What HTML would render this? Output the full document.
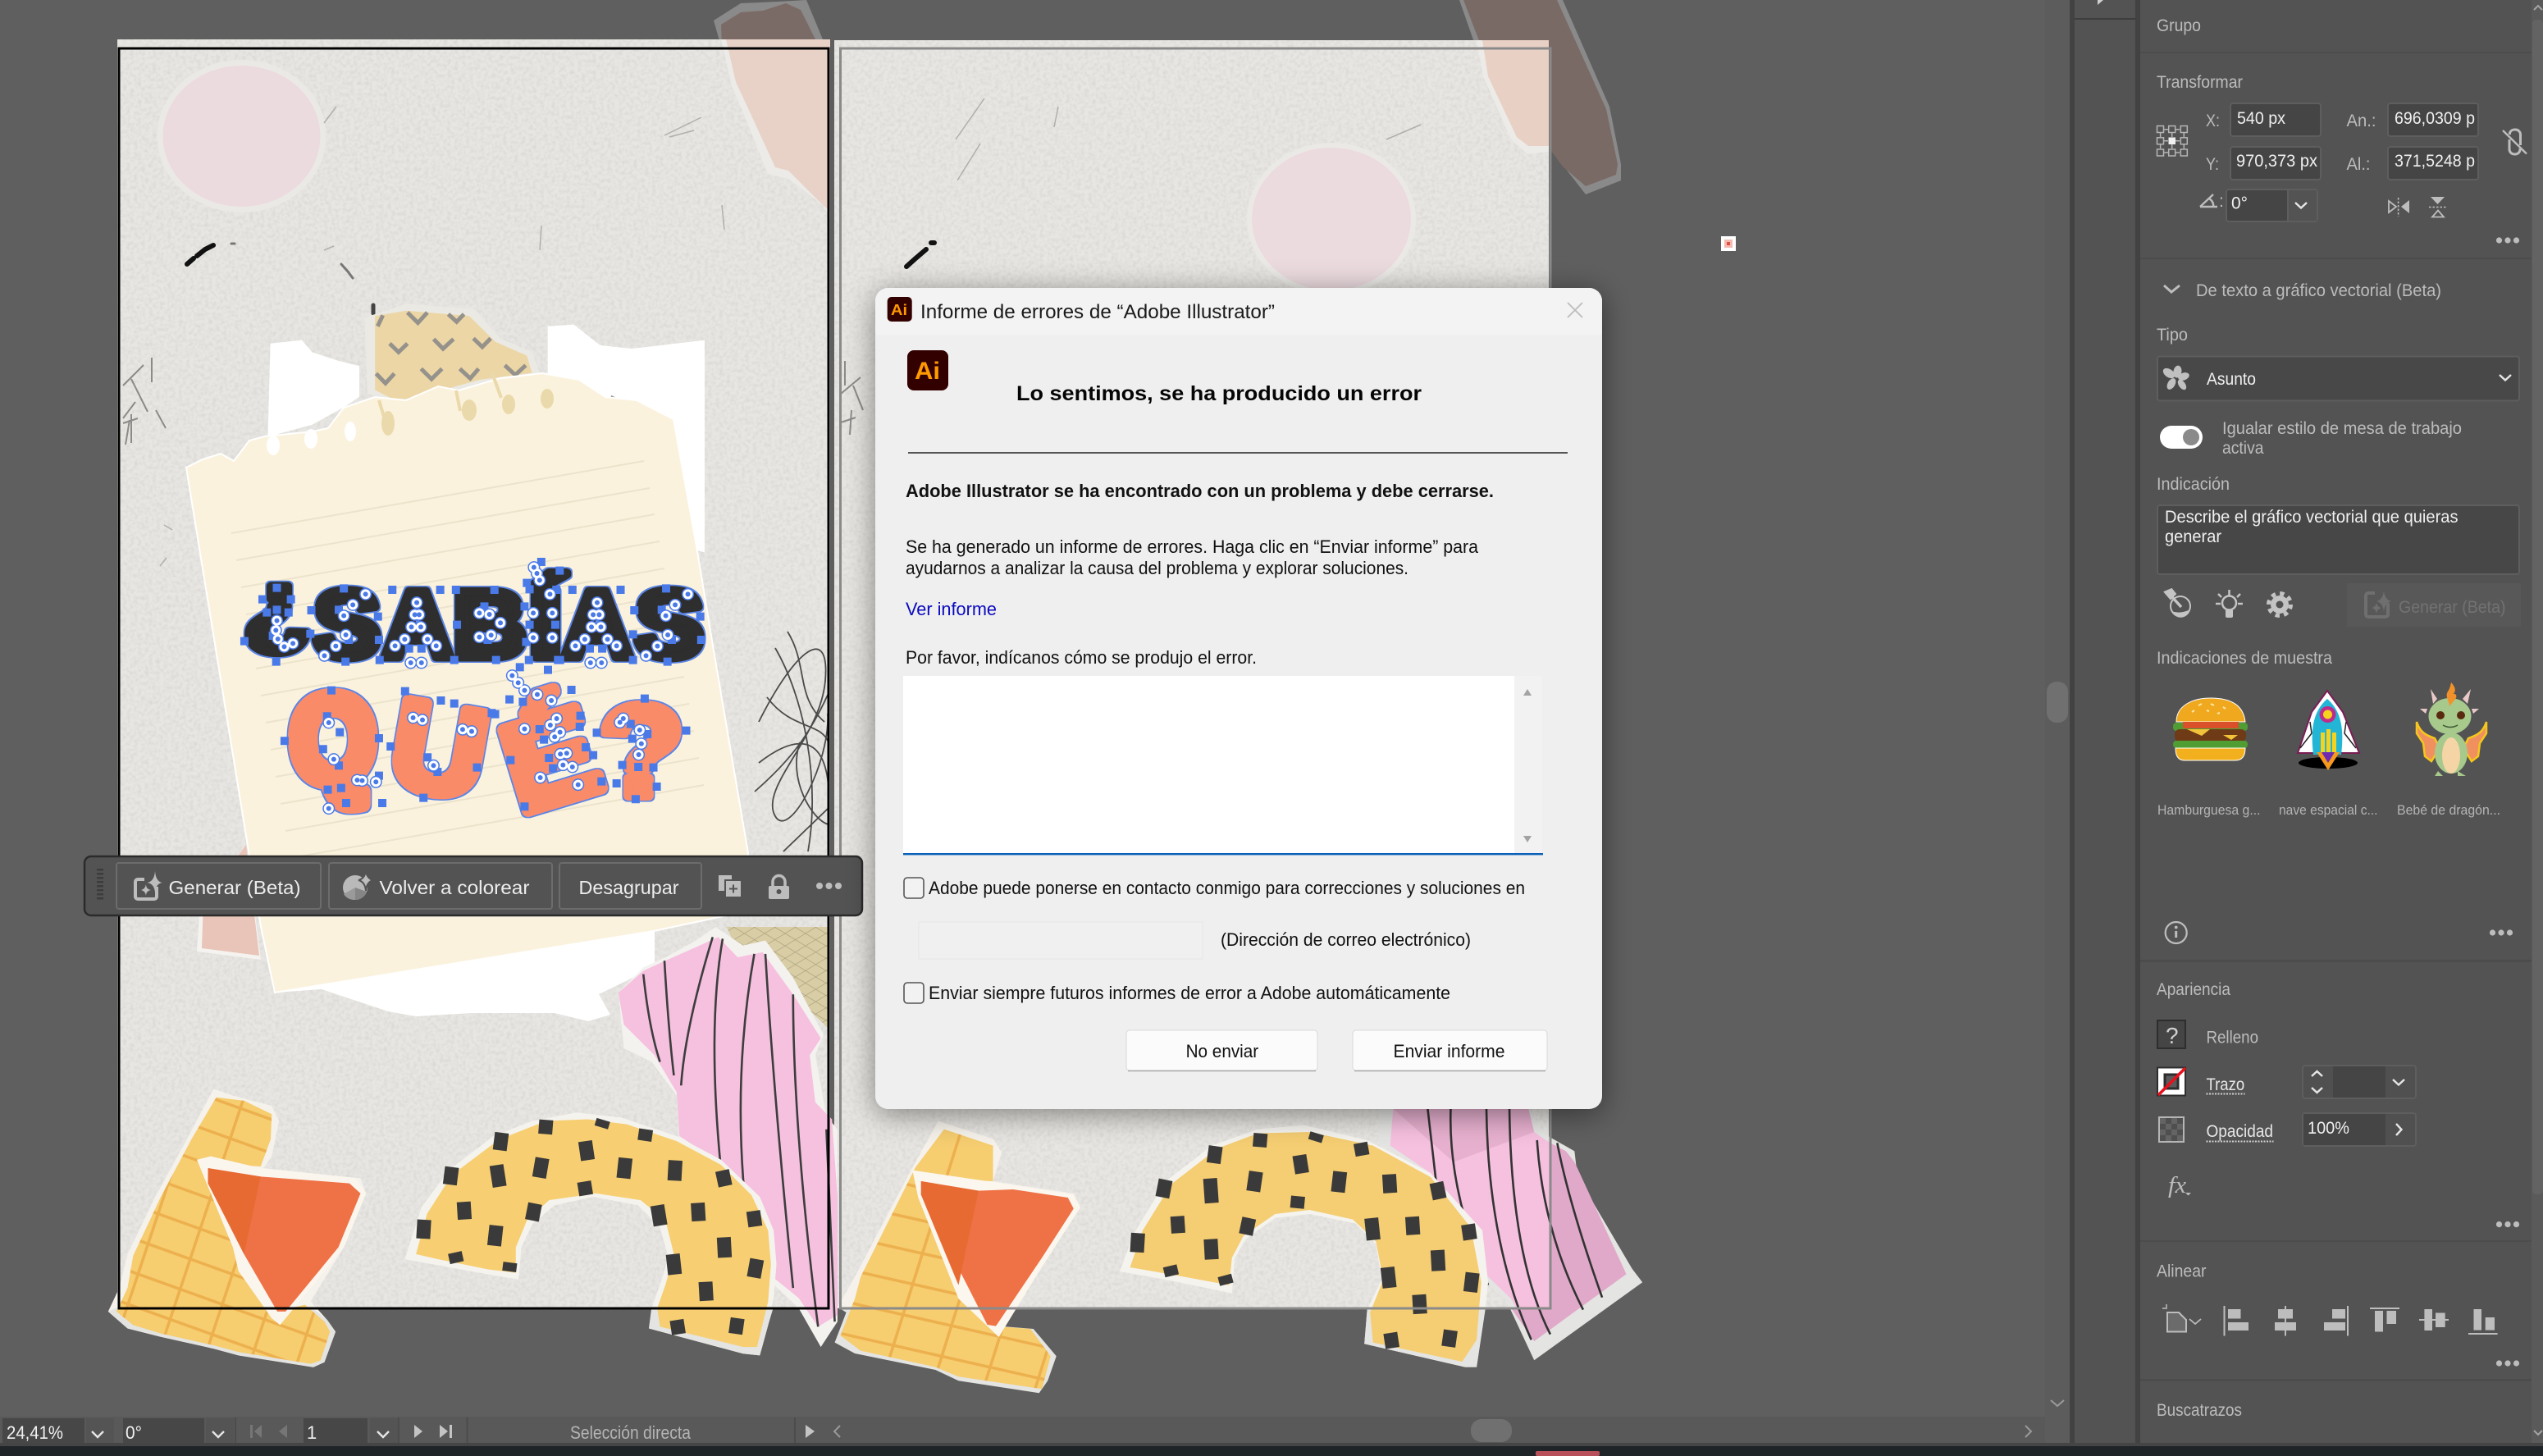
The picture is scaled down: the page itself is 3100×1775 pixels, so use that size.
<!DOCTYPE html>
<html lang="es"><head><meta charset="utf-8"><title>Adobe Illustrator</title>
<style>
html,body{margin:0;padding:0;background:#5f5f5f;width:3100px;height:1775px;overflow:hidden}
svg{display:block}
text{font-family:"Liberation Sans",sans-serif;white-space:pre}
.z *{vector-effect:non-scaling-stroke}
.l{fill:#bcbcbc;font-size:21px}
.v{fill:#f0f0f0;font-size:21px}
.d{fill:#111;font-size:22px}
.t{fill:#ededed;font-size:23px}
.s{fill:#f0f0f0;font-size:22px}
.ch{fill:none;stroke:#e6e6e6;stroke-width:2.4}
.ic{fill:#bdbdbd}
.o{fill:none;stroke:#bdbdbd;stroke-width:2}
.let1{font-weight:700;font-size:116px;fill:#2d2d2d;stroke:#2d2d2d;stroke-width:11;stroke-linejoin:round}
.let2{font-weight:700;fill:#f98b68;stroke:#f98b68;stroke-width:14;stroke-linejoin:round}
</style></head><body>
<svg xmlns="http://www.w3.org/2000/svg" width="3100" height="1775" viewBox="0 0 3100 1775">
<defs>
<filter id="noise" x="0" y="0" width="100%" height="100%"><feTurbulence type="fractalNoise" baseFrequency=".22" numOctaves="3" seed="4"/><feColorMatrix values="0 0 0 0 .45 0 0 0 0 .44 0 0 0 0 .42 .5 0 0 0 -.19"/></filter>
<filter id="ol" x="-5%" y="-20%" width="110%" height="140%"><feMorphology in="SourceAlpha" operator="dilate" radius="1.6" result="m"/><feFlood flood-color="#5a85e4"/><feComposite in2="m" operator="in" result="b"/><feMerge><feMergeNode in="b"/><feMergeNode in="SourceGraphic"/></feMerge></filter>
<filter id="sh" x="-10%" y="-10%" width="120%" height="120%"><feDropShadow dx="0" dy="6" stdDeviation="18" flood-color="#000" flood-opacity=".45"/></filter>
<clipPath id="cl1"><polygon points="390,505 440,515 490,555 488,630 470,710 360,700 500,1140 550,1120 585,1170 595,1200 578,1285 560,1295 430,1260 385,1240 290,1205 240,1180 210,1140 230,1070 240,975 290,800 345,630"/></clipPath>
<clipPath id="cl2"><polygon points="215,230 300,290 300,420 175,410 300,950 365,960 400,1060 385,1180 240,1135 200,1100 70,1040 35,985 60,850 70,770 165,370"/></clipPath>
<pattern id="plaid" width="26" height="26" patternUnits="userSpaceOnUse" patternTransform="rotate(45)"><rect width="26" height="26" fill="#d8cda4"/><path d="M0 0H26M0 0V26" stroke="#a79d7c" stroke-width="2.5"/></pattern>
</defs>

<!-- canvas -->
<rect width="3100" height="1775" fill="#5f5f5f"/>

<!-- brown pieces outside artboards -->
<polygon points="870,25 903,4 948,2 983,0 1008,60 1012,120 1012,60 880,60" fill="#8a8a8a"/>
<polygon points="879,30 903,15 930,13 958,4 976,12 1000,60 880,60" fill="#7b6b66"/>
<polygon points="1779,0 1905,0 1962,130 1976,200 1976,220 1933,237 1912,210 1888,180 1800,60" fill="#8a8a8a"/>
<polygon points="1784,0 1898,0 1958,133 1972,200 1970,213 1933,227 1905,203 1888,180 1807,60" fill="#7a6a65"/>

<!-- papers -->
<rect x="143" y="48" width="869" height="1547" fill="#e8e6e2"/>
<rect x="1017" y="49" width="871" height="1546" fill="#e8e6e2"/>
<rect x="143" y="48" width="869" height="1547" filter="url(#noise)"/>
<rect x="1017" y="49" width="871" height="1546" filter="url(#noise)"/>

<!-- left top art -->
<polygon points="879,48 1012,48 1012,265 1003,250 961,218 936,212 905,135 892,105" fill="#ecebe7"/>
<polygon points="885,48 1012,48 1012,257 1005,252 961,208 945,204 911,130 897,100" fill="#e8d2c8"/>
<ellipse cx="294.5" cy="166" rx="103" ry="93" fill="#ebe9e6"/>
<ellipse cx="294.5" cy="166" rx="96" ry="86" fill="#ebdbdf"/>
<g fill="none" stroke="#111" stroke-width="5" stroke-linecap="round">
<path d="M228 322l8-7M240 312l10-8 10-5" stroke-width="6"/><path d="M416 322l8 9 6 8M282 297h4" stroke-width="3" stroke="#777"/><path d="M455 372v10" stroke="#444" stroke-width="5"/>
</g>
<g fill="none" stroke="#6e6e6e" stroke-width="2" opacity=".75">
<path d="M185 436v30M150 470l25-25M160 462l20 40M165 490l-15 20M190 500l12 22M158 512l-5 30M160 540V505M150 516l18-6"/>
</g>
<g fill="none" stroke="#9a9894" stroke-width="1.5" opacity=".7">
<path d="M810 165l45-22M816 167l30-8M410 130l-15 20M395 305l12-5M660 275l-2 30M880 250l3 30"/>
<path d="M252 615l6 4M195 690l8-10M200 640l10 6"/>
</g>

<!-- white strips / tan piece -->
<g class="z" transform="matrix(.6378 0 0 .4209 100 0)">
<polygon fill="#fff" points="360,995 420,985 440,1020 490,1045 530,1060 530,1150 500,1180 440,1230 355,1265"/>
<polygon fill="#fff" points="890,945 940,940 990,1000 1050,1010 1190,985 1190,1600 1100,1560 890,1100"/>
<polygon fill="#ebe9e3" points="540,920 620,880 750,895 800,980 860,1020 880,1100 640,1180 545,1140"/>
<polygon fill="#ecd6a6" points="560,915 620,900 740,915 790,990 850,1030 860,1080 760,1100 640,1150 600,1160 560,1130"/>
<path fill="none" stroke="#95928c" stroke-width="5" d="M622 905l20 30 18-30M700 910l16 22 14-22M588 995l17 25 17-25M672 982l18 28 20-28M748 980l17 25 16-25M562 1082l18 28 17-28M648 1068l20 30 20-30M722 1068l20 28 16-28M808 1058l20 28 20-28"/>
<path fill="none" stroke="#95928c" stroke-width="5" d="M565 945l10-32M720 1175l8-25M880 1170l12-28M960 1155l8-18M1010 1150l25 20"/>
</g>

<!-- left note -->
<polygon fill="#fff" points="335,1210 392,1206 473,1233 507,1239 575,1235 676,1235 717,1245 744,1237 730,1212 798,1179 798,1132 500,1150"/>
<polygon fill="#fbf2dd" stroke="#fff" stroke-width="2" points="227,570 247,560 269,553 285,562 304,537 323,532 381,526 400,522 419,497 457,484 495,488 534,471 559,476 610,461 661,455 706,463 738,484 776,488 821,511 848,660 870,793 912,1040 905,1112 797,1135 335,1210 318,1130"/>
<g fill="#ead9ab"><ellipse cx="473" cy="516" rx="8" ry="15"/><ellipse cx="572" cy="500" rx="9" ry="13"/><ellipse cx="620" cy="493" rx="8" ry="12"/><ellipse cx="667" cy="486" rx="8" ry="12"/></g>
<path d="M462 488l9 30M556 476l5 25M600 455l11 30" stroke="#ead9ab" stroke-width="4" fill="none"/>
<g fill="#fff"><ellipse cx="427" cy="526" rx="7" ry="12"/><ellipse cx="379" cy="535" rx="8" ry="12"/><ellipse cx="333" cy="543" rx="8" ry="12"/></g>
<path fill="none" stroke="#ece3cd" stroke-width="2" d="M282 650L785 562M288 683L792 595M294 716L798 627M300 749L804 660M306 782L810 693M312 815L816 726M318 848L822 759M324 881L828 792M330 914L834 825M336 947L840 858M342 980L846 891M348 1013L852 924M354 1046L858 957"/>

<!-- scribble -->
<path fill="none" stroke="#4b4b4b" stroke-width="1.8" d="M925 880C970 790 1012 760 1006 830C1000 900 925 960 945 995C962 1025 1012 930 1009 870M925 930C970 895 1005 895 1010 960M955 1038L1010 985M945 790C980 850 1000 950 985 1038M920 965C960 930 985 900 1010 845M975 905C960 950 990 1000 1010 1005M935 850C965 890 1000 880 1010 905M960 770C985 810 970 850 1005 880"/>

<!-- Sabias -->
<g filter="url(#ol)">
<text class="let1" x="297" y="776" textLength="82" lengthAdjust="spacingAndGlyphs">¿</text>
<text class="let1" x="382" y="801" textLength="82" lengthAdjust="spacingAndGlyphs">S</text>
<text class="let1" x="466" y="801" textLength="86" lengthAdjust="spacingAndGlyphs">A</text>
<text class="let1" x="552" y="801" textLength="90" lengthAdjust="spacingAndGlyphs">B</text>
<text class="let1" x="644" y="801" textLength="42" lengthAdjust="spacingAndGlyphs">Í</text>
<text class="let1" x="685" y="801" textLength="86" lengthAdjust="spacingAndGlyphs">A</text>
<text class="let1" x="774" y="801" textLength="84" lengthAdjust="spacingAndGlyphs">S</text>
</g>
<g filter="url(#ol)">
<text class="let2" style="stroke-width:19" x="354" y="953" font-size="150" textLength="104" lengthAdjust="spacingAndGlyphs">Q</text>
<text class="let2" transform="rotate(10 537 910)" x="479" y="966" font-size="152" textLength="114" lengthAdjust="spacingAndGlyphs">U</text>
<text class="let2" style="stroke-width:15" transform="rotate(-17 670 925)" x="616" y="978" font-size="150" textLength="110" lengthAdjust="spacingAndGlyphs">É</text>
<text class="let2" style="stroke-width:12" x="730" y="970" font-size="158" textLength="104" lengthAdjust="spacingAndGlyphs">?</text>
</g>
<g class="z" transform="matrix(.408 0 0 .3333 260 660)" fill="none">
<path stroke="#4a7ae8" stroke-width="10" stroke-linecap="square" d="M190 170h0M147 212h0M232 212h0M160 260h0M225 260h0M190 250h0M93 365h0M188 440h0M178 345h0M290 338h0M390 172h0M293 252h0M375 250h0M492 275h0M495 360h0M395 440h0M405 360h0M535 177h0M678 177h0M497 434h0M585 392h0M622 392h0M720 434h0M725 177h0M840 177h0M728 305h0M845 434h0M810 238h0M820 360h0M930 238h0M935 368h0M980 75h0M1035 107h0M937 152h0M945 175h0M1025 177h0M945 305h0M1022 305h0M943 434h0M1030 434h0M1073 177h0M1217 177h0M1036 434h0M1125 392h0M1162 392h0M1254 434h0M1353 172h0M1258 252h0M1340 250h0M1455 275h0M1458 360h0M1357 440h0M1370 360h0M1254 340h0M353 545h0M213 730h0M495 720h0M342 908h0M382 902h0M397 957h0M505 957h0M495 857h0M340 640h0M378 698h0M328 760h0M375 820h0M573 548h0M680 582h0M720 593h0M832 628h0M530 750h0M788 827h0M628 938h0M640 790h0M670 843h0M916 460h0M1000 470h0M885 578h0M925 587h0M1070 543h0M1097 638h0M1095 678h0M1113 753h0M1135 782h0M1160 878h0M930 970h0M888 800h0M975 687h0M988 725h0M1003 792h0M1015 830h0M842 632h0M1289 575h0M1413 692h0M1146 700h0M1247 668h0M1297 705h0M1252 722h0M1222 818h0M1315 827h0M1270 825h0M1205 885h0M1325 897h0M1262 943h0"/>
<g id="hds" stroke-linecap="round">
<path stroke="#4a7ae8" stroke-width="15" d="M455 193h0M417 232h0M390 272h0M396 342h0M366 383h0M332 418h0M190 290h0M187 325h0M193 357h0M212 385h0M238 373h0M608 224h0M602 268h0M615 268h0M592 313h0M620 313h0M572 358h0M640 358h0M543 382h0M666 382h0M590 444h0M622 444h0M795 262h0M825 267h0M858 298h0M795 350h0M830 343h0M958 95h0M967 117h0M975 142h0M1006 193h0M956 262h0M1013 262h0M956 352h0M1013 352h0M1147 224h0M1135 268h0M1153 268h0M1130 313h0M1158 313h0M1110 358h0M1178 358h0M1082 382h0M1205 382h0M1127 444h0M1160 444h0M1418 193h0M1380 232h0M1352 272h0M1358 342h0M1327 383h0M1293 418h0M345 663h0M360 797h0M345 977h0M445 875h0M430 873h0M486 880h0M597 645h0M625 653h0M745 688h0M772 695h0M658 820h0M893 491h0M911 517h0M930 545h0M968 560h0M1010 582h0M930 686h0M1026 648h0M1007 672h0M1036 698h0M1020 715h0M1037 778h0M1056 775h0M1045 818h0M1073 825h0M977 864h0M1090 890h0M1225 648h0M1215 662h0M1274 690h0M1279 740h0M1271 780h0"/>
<path stroke="#fff" stroke-width="12" d="M455 193h0M417 232h0M390 272h0M396 342h0M366 383h0M332 418h0M190 290h0M187 325h0M193 357h0M212 385h0M238 373h0M608 224h0M602 268h0M615 268h0M592 313h0M620 313h0M572 358h0M640 358h0M543 382h0M666 382h0M590 444h0M622 444h0M795 262h0M825 267h0M858 298h0M795 350h0M830 343h0M958 95h0M967 117h0M975 142h0M1006 193h0M956 262h0M1013 262h0M956 352h0M1013 352h0M1147 224h0M1135 268h0M1153 268h0M1130 313h0M1158 313h0M1110 358h0M1178 358h0M1082 382h0M1205 382h0M1127 444h0M1160 444h0M1418 193h0M1380 232h0M1352 272h0M1358 342h0M1327 383h0M1293 418h0M345 663h0M360 797h0M345 977h0M445 875h0M430 873h0M486 880h0M597 645h0M625 653h0M745 688h0M772 695h0M658 820h0M893 491h0M911 517h0M930 545h0M968 560h0M1010 582h0M930 686h0M1026 648h0M1007 672h0M1036 698h0M1020 715h0M1037 778h0M1056 775h0M1045 818h0M1073 825h0M977 864h0M1090 890h0M1225 648h0M1215 662h0M1274 690h0M1279 740h0M1271 780h0"/>
<path stroke="#4a7ae8" stroke-width="6" d="M455 193h0M417 232h0M390 272h0M396 342h0M366 383h0M332 418h0M190 290h0M187 325h0M193 357h0M212 385h0M238 373h0M608 224h0M602 268h0M615 268h0M592 313h0M620 313h0M572 358h0M640 358h0M543 382h0M666 382h0M590 444h0M622 444h0M795 262h0M825 267h0M858 298h0M795 350h0M830 343h0M958 95h0M967 117h0M975 142h0M1006 193h0M956 262h0M1013 262h0M956 352h0M1013 352h0M1147 224h0M1135 268h0M1153 268h0M1130 313h0M1158 313h0M1110 358h0M1178 358h0M1082 382h0M1205 382h0M1127 444h0M1160 444h0M1418 193h0M1380 232h0M1352 272h0M1358 342h0M1327 383h0M1293 418h0M345 663h0M360 797h0M345 977h0M445 875h0M430 873h0M486 880h0M597 645h0M625 653h0M745 688h0M772 695h0M658 820h0M893 491h0M911 517h0M930 545h0M968 560h0M1010 582h0M930 686h0M1026 648h0M1007 672h0M1036 698h0M1020 715h0M1037 778h0M1056 775h0M1045 818h0M1073 825h0M977 864h0M1090 890h0M1225 648h0M1215 662h0M1274 690h0M1279 740h0M1271 780h0"/>
</g>
</g>

<!-- left bottom art -->
<g><polygon points="300,1030 318,1170 240,1160 244,1100" fill="#f5f3ef"/><polygon points="300,1030 316,1165 246,1156 248,1100" fill="#e9c4b8"/></g>
<g class="z" transform="matrix(.6761 0 0 .4113 0 1130)">
<polygon fill="#d9cda2" points="1310,0 1493,0 1493,300 1430,200 1380,40 1330,70"/>
<polygon fill="url(#plaid)" points="1310,0 1493,0 1493,300 1430,200 1380,40 1330,70"/>
<polygon fill="#f3f2ee" points="1290,0 1340,55 1380,40 1430,150 1485,320 1470,380 1490,560 1510,600 1510,1170 1480,1245 1440,1130 1395,1060 1225,640 1220,500 1175,400 1125,360 1115,195 1160,120 1200,90 1255,40"/>
<polygon fill="#f6c0df" points="1295,30 1330,90 1375,75 1430,200 1480,330 1460,380 1470,520 1500,570 1510,800 1510,1150 1475,1185 1440,1100 1395,1040 1380,850 1300,700 1225,620 1220,490 1180,380 1125,290 1115,195 1160,130 1200,100 1255,60"/>
<path fill="none" stroke="#3d3d3d" stroke-width="2.600" d="M1160 140Q1170 300 1190 400M1198 100Q1205 300 1215 440M1285 30Q1235 300 1228 470M1303 35Q1275 300 1300 720M1360 80Q1320 450 1345 840M1380 80Q1395 500 1430 1070M1430 200Q1430 600 1475 1185M1490 600L1505 1170"/>
<polygon fill="#f5f2ec" points="385,480 420,500 490,530 503,575 490,680 475,715 650,745 660,790 620,950 560,1110 590,1165 605,1200 585,1290 565,1305 430,1270 385,1250 290,1215 230,1190 195,1140 215,1070 230,970 280,800 340,620"/>
<polygon fill="#e3e3e1" points="215,1125 560,1125 590,1165 605,1200 585,1290 565,1305 430,1270 385,1250 290,1215 230,1190 195,1140"/>
<polygon fill="#f6cd6f" points="390,505 440,515 490,555 488,630 470,710 360,700 500,1140 550,1120 585,1170 595,1200 578,1285 560,1295 430,1260 385,1240 290,1205 240,1180 210,1140 230,1070 240,975 290,800 345,630"/>
<g clip-path="url(#cl1)"><path fill="none" stroke="#edb04e" stroke-width="3.500" d="M360 480L190 1320M445 480L275 1320M530 480L360 1320M615 480L445 1320M700 480L530 1320M785 480L615 1320M200 400L620 648M200 500L620 748M200 600L620 848M200 700L620 948M200 800L620 1048M200 900L620 1148M200 1000L620 1248M200 1100L620 1348"/></g>
<polygon fill="#faf6ee" points="355,690 380,680 470,715 640,745 660,790 620,950 530,1130 505,1180 490,1160 430,1020 420,950"/>
<polygon fill="#ef7246" points="375,715 470,740 630,760 650,790 610,950 515,1140 500,1140 440,970 375,760"/>
<polygon fill="#e86a33" points="375,715 470,740 440,970 375,760"/>
<polygon fill="#f5f3ee" points="730,985 760,830 810,720 890,620 960,575 1040,550 1120,565 1220,620 1300,690 1370,800 1395,900 1400,1000 1395,1100 1385,1180 1370,1270 1340,1265 1170,1190 1175,1130 1190,1060 1205,980 1190,890 1150,825 1070,800 1000,825 960,880 940,950 935,1045 880,1030 780,1000"/>
<polygon fill="#e4e4e2" points="1175,1125 1395,1125 1385,1180 1370,1270 1340,1265 1170,1190"/>
<polygon fill="#f7cf72" points="750,970 770,850 815,735 900,630 985,575 1060,570 1130,585 1220,635 1300,705 1355,795 1385,900 1390,1000 1385,1110 1365,1245 1340,1245 1190,1185 1185,1130 1200,1060 1215,970 1200,870 1155,810 1075,790 990,810 950,870 930,950 930,1025 880,1015 790,985"/>
<path fill="none" stroke="#3a3a3a" stroke-width="17" d="M985 572l-2 42M1088 572l-4 22M905 610l-4 52M1165 600l-3 34M1055 635l5 56M815 712l-4 52M895 706l6 64M978 685l-6 58M1128 685l-4 60M1218 692l-2 60M1302 722l6 46M1053 755l4 40M836 815l2 52M965 820l-6 50M1185 825l6 60M1258 818l2 54M1358 842l4 46M765 868l-2 56M895 885l-4 60M1305 920l2 60M1213 970l4 60M1365 985l-6 54M820 965l4 30M920 995l-2 26M1272 1052l2 56M1220 1165l4 42M1330 1160l-4 46"/>
</g>

<!-- right art -->
<ellipse cx="1623" cy="267" rx="103" ry="93" fill="#ebe9e6"/>
<ellipse cx="1623" cy="267" rx="97" ry="87" fill="#ebdbdf"/>
<polygon points="1800,49 1888,49 1888,185 1862,188 1842,170 1808,93" fill="#ecebe7"/>
<polygon points="1807,49 1888,49 1888,178 1863,178 1849,167 1814,93" fill="#e8d0c4"/>
<g fill="none" stroke="#6e6e6e" stroke-width="2" opacity=".75">
<path d="M1030 440v30M1025 480l24-20M1040 470l12 30M1038 500l-2 30M1025 515l18-6"/>
</g>
<g fill="none" stroke="#9a9894" stroke-width="1.500" opacity=".7">
<path d="M1200 120l-35 50M1195 175l-28 45M1290 130l-5 25M1690 170l42-18"/>
</g>
<path d="M1105 325l10-9 14-12M1135 296h4" stroke="#111" stroke-width="6" fill="none" stroke-linecap="round"/>
<g class="z" transform="matrix(.7018 0 0 .3333 1000 1300)">
<polygon fill="#e4e4e2" points="970,155 1230,155 1260,250 1310,310 1315,400 1410,740 1428,790 1240,1075 1190,850 1160,800 1120,600 1050,380 970,280"/>
<polygon fill="#f6c0df" points="995,155 1230,155 1240,240 1260,270 1295,310 1310,350 1400,760 1240,1005 1200,850 1155,760 1130,590 1060,390 990,290"/>
<polygon fill="#e1a9c9" points="1267,280 1295,310 1310,350 1400,760 1240,1005 1200,885 1267,885"/>
<polygon fill="#d49dbd" opacity=".45" points="995,155 1230,155 1240,240 1100,350"/>
<path fill="none" stroke="#333" stroke-width="2.600" d="M1055 155L1070 430M1095 155Q1090 450 1160 800M1157 155Q1160 650 1235 1000M1197 155Q1200 700 1268 980M1245 270Q1255 600 1325 890M1280 280Q1300 500 1358 845"/>
<polygon fill="#f6f2eb" points="205,200 300,265 315,315 300,420 440,465 450,515 380,750 335,880 30,880 60,770 160,370"/>
<polygon fill="#e4e4e2" points="30,880 335,880 310,950 370,960 410,1060 395,1150 380,1195 240,1150 200,1110 60,1050 25,1010 45,900"/>
<polygon fill="#f6cd6f" points="215,230 300,290 300,420 175,410 300,950 365,960 400,1060 385,1180 240,1135 200,1100 70,1040 35,985 60,850 70,770 165,370"/>
<g clip-path="url(#cl2)"><path fill="none" stroke="#edb04e" stroke-width="3.500" d="M250 200L100 1200M340 200L190 1200M430 200L280 1200M520 200L370 1200M0 360L420 560M0 480L420 680M0 600L420 800M0 720L420 920M0 840L420 1040M0 960L420 1160M0 1080L420 1280"/></g>
<polygon fill="#fbf7ee" points="160,380 290,420 440,470 452,515 380,750 310,990 290,950 240,850 170,480"/>
<polygon fill="#ef7246" points="175,420 275,455 335,450 430,480 440,520 385,700 305,950 290,945 175,470"/>
<polygon fill="#e86a33" points="175,420 275,455 240,800 175,470"/>
<polygon fill="#f5f3ee" points="520,750 545,610 600,420 680,290 760,230 840,215 950,270 1060,390 1150,600 1160,790 1155,890 1140,1100 1120,1100 945,1015 950,890 975,780 965,650 930,575 850,540 790,555 740,630 720,700 715,830 600,780"/>
<polygon fill="#e4e4e2" points="950,885 1155,885 1140,1100 1120,1100 945,1015"/>
<polygon fill="#f5cd72" points="538,735 560,600 610,430 690,300 760,245 850,240 960,290 1060,405 1130,590 1148,790 1140,1000 1115,1080 960,1010 955,900 978,780 965,640 925,560 850,525 790,540 735,620 715,700 710,800 620,765"/>
<path fill="none" stroke="#3a3a3a" stroke-width="17" d="M765 245l-2 50M863 245l-4 28M687 292l-4 62M938 280l4 46M832 325l5 66M600 415l-6 64M677 410l3 90M757 385l-5 72M903 385l-4 75M988 395l2 68M1070 425l6 60M830 475l-2 44M620 548l2 62M745 555l-6 60M957 555l4 80M1028 550l2 66M1125 578l4 56M552 610l-2 70M678 632l2 74M1072 672l2 76M985 735l4 75M1133 755l-4 70M607 730l4 36M702 765l4 32M1040 835l2 70M990 975l4 55M1095 965l-4 60"/>
</g>

<!-- artboards -->
<rect x="145" y="59" width="865" height="1536" fill="none" stroke="#000" stroke-width="3"/>
<rect x="1024.5" y="59" width="865.5" height="1536" fill="none" stroke="#8a8a8a" stroke-width="3"/>

<!-- stray square -->
<rect x="2098" y="288" width="18" height="18" fill="#fff"/><rect x="2102" y="292" width="10" height="10" fill="#f4b9b0"/><rect x="2105" y="295" width="4" height="4" fill="#e0503f"/>

<!-- floating toolbar -->
<rect x="103" y="1044" width="948" height="72" rx="8" fill="#535353" stroke="#2b2b2b" stroke-width="2.500"/>
<path d="M122 1059v39" stroke="#3c3c3c" stroke-width="8" stroke-dasharray="2.500 2.500" fill="none"/>
<g fill="none" stroke="#6c6c6c" stroke-width="2"><rect x="142" y="1052" width="249" height="56" rx="3"/><rect x="401" y="1052" width="272" height="56" rx="3"/><rect x="682" y="1052" width="173" height="56" rx="3"/></g>
<path class="o" style="stroke-width:4" d="M176 1072h-8a3 3 0 0 0-3 3v18a3 3 0 0 0 3 3h20a3 3 0 0 0 3-3v-12"/>
<path class="ic" d="M189 1062Q190 1075 198 1076Q190 1077 189 1088Q188 1077 179 1076Q188 1075 189 1062ZM178 1078Q178 1084 184 1085Q178 1086 178 1092Q177 1086 172 1085Q177 1084 178 1078Z"/>
<text class="t" x="205.5" y="1090" textLength="161" lengthAdjust="spacingAndGlyphs">Generar (Beta)</text>
<circle cx="433" cy="1082" r="15" fill="#b9b9b9"/><path d="M433 1082L433 1097A15 15 0 0 0 447 1087Z" fill="#858585"/><path d="M433 1082L419 1090A15 15 0 0 0 433 1097Z" fill="#9a9a9a"/>
<path class="ic" stroke="#535353" stroke-width="2" d="M446 1061Q447 1071 455 1073Q447 1075 446 1086Q445 1075 437 1073Q445 1071 446 1061Z"/>
<text class="t" x="462.5" y="1090" textLength="183" lengthAdjust="spacingAndGlyphs">Volver a colorear</text>
<text class="t" x="705.5" y="1090" textLength="122" lengthAdjust="spacingAndGlyphs">Desagrupar</text>
<rect x="876" y="1067" width="16" height="19" class="ic"/><rect x="884" y="1073" width="20" height="21" class="ic" stroke="#535353" stroke-width="2"/><path d="M889 1083.500h10M894 1078.500v10" stroke="#535353" stroke-width="2"/>
<rect x="937" y="1080" width="25" height="16" rx="2" class="ic"/><path d="M942 1081v-6a7.500 7.500 0 0 1 15 0v6" fill="none" stroke="#bdbdbd" stroke-width="3.500"/><circle cx="949.500" cy="1087" r="3" fill="#535353"/>
<g class="ic"><circle cx="999" cy="1080" r="4"/><circle cx="1010.500" cy="1080" r="4"/><circle cx="1022" cy="1080" r="4"/></g>

<!-- dialog -->
<rect x="1067" y="351" width="886" height="1001" rx="16" fill="#efefef" filter="url(#sh)"/>
<path d="M1083 351h854a16 16 0 0 1 16 16v41h-886v-41a16 16 0 0 1 16-16z" fill="#f3f3f3"/>
<rect x="1081.700" y="362" width="30" height="30" rx="5" fill="#330000"/>
<text x="1086" y="384" font-size="18" font-weight="700" fill="#ff9a00" textLength="20" lengthAdjust="spacingAndGlyphs">Ai</text>
<text x="1122" y="388" fill="#1a1a1a" font-size="24" textLength="432" lengthAdjust="spacingAndGlyphs">Informe de errores de “Adobe Illustrator”</text>
<path d="M1911 369l18 18M1929 369l-18 18" stroke="#bdbdbd" stroke-width="1.800" fill="none"/>
<rect x="1106" y="427" width="50" height="49" rx="8" fill="#330000"/>
<text x="1115" y="462" font-size="30" font-weight="700" fill="#ff9a00" textLength="31" lengthAdjust="spacingAndGlyphs">Ai</text>
<text x="1239" y="488" fill="#050505" font-size="25" font-weight="700" textLength="494" lengthAdjust="spacingAndGlyphs">Lo sentimos, se ha producido un error</text>
<path d="M1107 552h804" stroke="#222" stroke-width="1.600"/>
<text class="d" x="1104" y="606" font-weight="700" textLength="717" lengthAdjust="spacingAndGlyphs">Adobe Illustrator se ha encontrado con un problema y debe cerrarse.</text>
<text class="d" x="1104" y="674" textLength="698" lengthAdjust="spacingAndGlyphs">Se ha generado un informe de errores. Haga clic en “Enviar informe” para</text>
<text class="d" x="1104" y="700" textLength="613" lengthAdjust="spacingAndGlyphs">ayudarnos a analizar la causa del problema y explorar soluciones.</text>
<text x="1104" y="750" font-size="22" fill="#0a0ac0" textLength="111" lengthAdjust="spacingAndGlyphs">Ver informe</text>
<text class="d" x="1104" y="809" textLength="428" lengthAdjust="spacingAndGlyphs">Por favor, indícanos cómo se produjo el error.</text>
<rect x="1101" y="824" width="745" height="216" fill="#fff"/><rect x="1846" y="824" width="34" height="216" fill="#f2f2f2"/>
<rect x="1101" y="1040" width="780" height="2.400" fill="#0a60b8"/>
<path d="M1862 840l5 8h-10zM1862 1027l5-8h-10z" fill="#a3a3a3"/>
<rect x="1102" y="1070" width="24" height="25" rx="4" fill="#f2f2f2" stroke="#555" stroke-width="1.600"/>
<text class="d" x="1132" y="1090" textLength="727" lengthAdjust="spacingAndGlyphs">Adobe puede ponerse en contacto conmigo para correcciones y soluciones en</text>
<rect x="1120" y="1124" width="346" height="45" fill="#f0f0f0" stroke="#e6e6e6"/>
<text class="d" x="1488" y="1153" textLength="305" lengthAdjust="spacingAndGlyphs">(Dirección de correo electrónico)</text>
<rect x="1102" y="1198" width="24" height="25" rx="4" fill="#f2f2f2" stroke="#555" stroke-width="1.600"/>
<text class="d" x="1132" y="1218" textLength="636" lengthAdjust="spacingAndGlyphs">Enviar siempre futuros informes de error a Adobe automáticamente</text>
<g fill="#fbfbfb" stroke="#d8d8d8"><rect x="1373" y="1256" width="233" height="49" rx="4"/><rect x="1649" y="1256" width="237" height="49" rx="4"/></g>
<path d="M1375 1305.500h229M1651 1305.500h233" stroke="#aaa" stroke-width="1.400"/>
<text class="d" x="1445.600" y="1289" textLength="88.600" lengthAdjust="spacingAndGlyphs">No enviar</text>
<text class="d" x="1698.500" y="1289" textLength="136" lengthAdjust="spacingAndGlyphs">Enviar informe</text>

<!-- status bar & scrollers -->
<rect x="0" y="1727" width="2493" height="32" fill="#595959"/>
<rect x="3" y="1729" width="100" height="30" fill="#474747"/><rect x="105" y="1729" width="34" height="30" fill="#545454"/>
<rect x="150" y="1729" width="99" height="30" fill="#474747"/><rect x="251" y="1729" width="34" height="30" fill="#545454"/>
<rect x="370" y="1729" width="78" height="30" fill="#474747"/><rect x="451" y="1729" width="34" height="30" fill="#545454"/>
<path d="M569.500 1728v31M969 1728v31M287 1728v31M486 1728v31" stroke="#4c4c4c" stroke-width="2"/>
<text class="s" x="8" y="1754" textLength="69" lengthAdjust="spacingAndGlyphs">24,41%</text>
<text class="s" x="153" y="1754" textLength="20" lengthAdjust="spacingAndGlyphs">0°</text>
<text class="s" x="374" y="1754">1</text>
<text x="695" y="1754" font-size="22" fill="#b4b4b4" textLength="147" lengthAdjust="spacingAndGlyphs">Selección directa</text>
<path class="ch" d="M112 1745l7 7 7-7M259 1745l7 7 7-7M460 1745l7 7 7-7"/>
<path d="M305 1737h3v16h-3zM319 1737v16l-9-8zM350 1737v16l-10-8z" fill="#767676"/>
<path d="M505 1737v16l10-8zM536 1737v16l10-8zM548 1737h3v16h-3zM982 1737v16l11-8z" fill="#c4c4c4"/>
<rect x="1793" y="1730" width="50" height="28" rx="13" fill="#707070"/>
<path d="M1024 1738l-7 7 7 7M2469 1738l7 7-7 7" fill="none" stroke="#9a9a9a" stroke-width="2"/>
<rect x="2493" y="0" width="30" height="1759" fill="#5c5c5c"/>
<rect x="2495" y="831" width="26" height="50" rx="12" fill="#707070"/>
<path d="M2500 1707l8 7 8-7" fill="none" stroke="#9a9a9a" stroke-width="2"/>

<!-- right docks -->
<rect x="2523" y="0" width="6" height="1759" fill="#424242"/>
<rect x="2529" y="0" width="74" height="1759" fill="#535353"/>
<rect x="2529" y="22" width="74" height="2" fill="#3d3d3d"/>
<path d="M2557 0v6l7-6z" fill="#d0d0d0"/>
<rect x="2603" y="0" width="6" height="1759" fill="#424242"/>
<rect x="2609" y="0" width="477" height="1759" fill="#535353"/>
<rect x="3086" y="0" width="14" height="1759" fill="#5a5a5a"/>
<rect x="3087" y="24" width="13" height="1432" rx="5" fill="#636363"/>
<path d="M3089 12l5-5 5 5M3089 1744l5 5 5-5" fill="none" stroke="#a5a5a5" stroke-width="2"/>
<g fill="#4c4c4c"><rect x="2609" y="63" width="477" height="2"/><rect x="2609" y="314" width="477" height="2"/><rect x="2609" y="1170" width="477" height="3"/><rect x="2609" y="1512" width="477" height="2"/><rect x="2609" y="1681" width="477" height="3"/></g>

<!-- panel: transform -->
<text class="l" x="2629" y="38" textLength="54" lengthAdjust="spacingAndGlyphs">Grupo</text>
<text class="l" x="2629" y="107" textLength="105" lengthAdjust="spacingAndGlyphs">Transformar</text>
<g fill="none" stroke="#b5b5b5" stroke-width="1.500">
<path d="M2638 157.700h5M2652 157.700h5M2638 171.800h5M2652 171.800h5M2638 186h5M2652 186h5M2633.600 162v5M2633.600 176v5M2647.700 162v5M2647.700 176v5M2662.300 162v5M2662.300 176v5"/>
<rect x="2629.500" y="153.500" width="8" height="8"/><rect x="2643.700" y="153.500" width="8" height="8"/><rect x="2658.300" y="153.500" width="8" height="8"/>
<rect x="2629.500" y="167.800" width="8" height="8"/><rect x="2658.300" y="167.800" width="8" height="8"/>
<rect x="2629.500" y="182" width="8" height="8"/><rect x="2643.700" y="182" width="8" height="8"/><rect x="2658.300" y="182" width="8" height="8"/>
</g><rect x="2643.500" y="167.500" width="8.500" height="8.500" fill="#f0f0f0"/>
<text class="l" x="2689" y="154" textLength="17" lengthAdjust="spacingAndGlyphs">X:</text>
<text class="l" x="2689" y="207" textLength="16" lengthAdjust="spacingAndGlyphs">Y:</text>
<text class="l" x="2860.500" y="154" textLength="36" lengthAdjust="spacingAndGlyphs">An.:</text>
<text class="l" x="2860.500" y="207" textLength="29" lengthAdjust="spacingAndGlyphs">Al.:</text>
<g fill="#454545" stroke="#5e5e5e" stroke-width="2">
<rect x="2719" y="126" width="110" height="40" rx="3"/><rect x="2719" y="179" width="110" height="40" rx="3"/>
<rect x="2911" y="126" width="110" height="40" rx="3"/><rect x="2911" y="179" width="110" height="40" rx="3"/>
<rect x="2714" y="231" width="111" height="39" rx="3"/>
</g>
<rect x="2790" y="232" width="34" height="37" fill="#535353"/>
<path d="M2789 231v39" stroke="#5e5e5e" stroke-width="2"/>
<text class="v" x="2727" y="151" textLength="59" lengthAdjust="spacingAndGlyphs">540 px</text>
<text class="v" x="2726" y="203" textLength="99" lengthAdjust="spacingAndGlyphs">970,373 px</text>
<text class="v" x="2919" y="151" textLength="98" lengthAdjust="spacingAndGlyphs">696,0309 p</text>
<text class="v" x="2919" y="203" textLength="98" lengthAdjust="spacingAndGlyphs">371,5248 p</text>
<text class="v" x="2720" y="254.500" textLength="20" lengthAdjust="spacingAndGlyphs">0°</text>
<path class="ch" d="M2798 247l7 6.500 7-6.500"/>
<path d="M2682 252h21M2682 252l16-15M2693 242q6 4 5 10" fill="none" stroke="#bdbdbd" stroke-width="2.400"/>
<text class="l" x="2705" y="252">:</text>
<path d="M3059.500 164v-2a6 6 0 0 1 6-4h1a6 6 0 0 1 6 6v13M3072 181v2a6 6 0 0 1-6 5h-1a6 6 0 0 1-6-6v-12" fill="none" stroke="#bdbdbd" stroke-width="3"/>
<path d="M3051 159l29 28.500" stroke="#bdbdbd" stroke-width="2.400"/>
<path d="M2912 245l9 7-9 7z" fill="none" stroke="#bdbdbd" stroke-width="1.800"/><path d="M2937 244l-10 8 10 8z" fill="#bdbdbd"/><path d="M2923.600 241v23" stroke="#bdbdbd" stroke-width="1.600" stroke-dasharray="2.500 2"/>
<path d="M2963 240h17l-8.500 9z" fill="#bdbdbd"/><path d="M2965 264.500h14l-7-8z" fill="none" stroke="#bdbdbd" stroke-width="1.800"/><path d="M2961 252.500h22" stroke="#bdbdbd" stroke-width="1.600" stroke-dasharray="2.500 2"/>
<g class="ic"><circle cx="3046.500" cy="293" r="3.600"/><circle cx="3057" cy="293" r="3.600"/><circle cx="3067.500" cy="293" r="3.600"/></g>

<!-- text to vector -->
<path d="M2638 348l9 8 10-8" fill="none" stroke="#bdbdbd" stroke-width="3"/>
<text class="l" x="2677" y="361" textLength="299" lengthAdjust="spacingAndGlyphs">De texto a gráfico vectorial (Beta)</text>
<text class="l" x="2629" y="415" textLength="38" lengthAdjust="spacingAndGlyphs">Tipo</text>
<rect x="2630" y="434.500" width="441" height="54" rx="3" fill="#484848" stroke="#5e5e5e" stroke-width="2"/>
<g fill="#c0c0c0" transform="translate(2653 461)"><ellipse cx="0" cy="-8" rx="5" ry="7.500" transform="rotate(10)"/><ellipse cx="-9" cy="-6" rx="5" ry="8" transform="rotate(-55 -9 -6)"/><ellipse cx="9" cy="-2" rx="4.500" ry="7" transform="rotate(70 9 -2)"/><ellipse cx="-6" cy="7" rx="4.500" ry="7.500" transform="rotate(30 -6 7)"/><ellipse cx="7" cy="8" rx="4" ry="7" transform="rotate(-35 7 8)"/></g>
<text class="v" x="2690" y="469" fill="#fff" textLength="60" lengthAdjust="spacingAndGlyphs">Asunto</text>
<path class="ch" d="M3047 457l7 6.500 7-6.500"/>
<rect x="2633" y="519" width="52" height="28" rx="14" fill="#fff"/><circle cx="2671" cy="533" r="10" fill="#8a8a8a"/>
<text class="l" x="2709" y="529" textLength="292" lengthAdjust="spacingAndGlyphs">Igualar estilo de mesa de trabajo</text>
<text class="l" x="2709" y="553" textLength="50.500" lengthAdjust="spacingAndGlyphs">activa</text>
<text class="l" x="2629" y="597" textLength="89" lengthAdjust="spacingAndGlyphs">Indicación</text>
<rect x="2630" y="616" width="441" height="84" rx="3" fill="#474747" stroke="#5e5e5e" stroke-width="2"/>
<text class="v" x="2639" y="637" textLength="357.500" lengthAdjust="spacingAndGlyphs">Describe el gráfico vectorial que quieras</text>
<text class="v" x="2639" y="661" textLength="69" lengthAdjust="spacingAndGlyphs">generar</text>
<!-- tools -->
<circle cx="2658" cy="739" r="12" fill="none" stroke="#c4c4c4" stroke-width="2"/><path d="M2647 745a12 12 0 0 0 23-2q-12 6-23 2z" fill="#c4c4c4"/><path d="M2640 722l7-3 4 5-5 5zM2648 728l11 12" fill="#c4c4c4" stroke="#c4c4c4" stroke-width="3.500"/>
<circle cx="2717.500" cy="735" r="8.500" fill="none" stroke="#c4c4c4" stroke-width="2.500"/><path d="M2713 744h9v7a2 2 0 0 1-2 2h-5a2 2 0 0 1-2-2z" fill="#c4c4c4"/><path d="M2717.500 719v7M2704 724l4 4M2731 724l-4 4M2701 736h6M2728 736h6" stroke="#c4c4c4" stroke-width="2.500"/>
<circle cx="2779" cy="737" r="11" fill="#c4c4c4"/><circle cx="2779" cy="737" r="13.500" fill="none" stroke="#c4c4c4" stroke-width="5" stroke-dasharray="5.300 5.300"/><circle cx="2779" cy="737" r="4.500" fill="#535353"/>
<rect x="2861" y="711" width="212" height="53" fill="#585858"/>
<path d="M2895 723h-8a3 3 0 0 0-3 3v23a3 3 0 0 0 3 3h21a3 3 0 0 0 3-3v-14" fill="none" stroke="#6f6f6f" stroke-width="4"/>
<path d="M2906 720Q2907 731 2915 733Q2907 735 2906 746Q2905 735 2897 733Q2905 731 2906 720ZM2897 735Q2898 740 2903 741Q2898 742 2897 748Q2896 742 2891 741Q2896 740 2897 735Z" fill="#6f6f6f"/>
<text x="2924" y="747" font-size="21" fill="#727272" textLength="130.500" lengthAdjust="spacingAndGlyphs">Generar (Beta)</text>
<text class="l" x="2629" y="809" textLength="214" lengthAdjust="spacingAndGlyphs">Indicaciones de muestra</text>
<!-- burger -->
<path d="M2653 880c0-20 20-29 42-29 26 0 40 10 42 29z" fill="#f0a81e" stroke="#fff" stroke-width="1"/>
<rect x="2649" y="881" width="91" height="10" rx="4" fill="#4f9d33"/>
<rect x="2661" y="880" width="68" height="8" fill="#d9502b"/>
<rect x="2651" y="889" width="87" height="15" rx="6" fill="#6e3b16"/>
<path d="M2666 889h28l-10 8zM2710 896h18l-8 6z" fill="#f3c33a"/>
<rect x="2649" y="903" width="91" height="9" rx="4" fill="#4f9d33"/>
<path d="M2652 912h85q0 15-12 15h-62q-11 0-11-15z" fill="#f2b01e" stroke="#fff" stroke-width="1"/>
<path d="M2680 860l4-2M2695 858l4 2M2710 862l3 2M2672 868l3-2M2703 870l3-1M2690 866l3 1" stroke="#fbe6a6" stroke-width="2"/>
<!-- rocket -->
<ellipse cx="2838" cy="930" rx="36" ry="7" fill="#000"/>
<polygon points="2837,842 2856,868 2876,918 2801,918 2818,868" fill="#fff" stroke="#7a1d55" stroke-width="2"/>
<path d="M2804 912l14-18-2-14M2872 912l-14-18 2-14" fill="none" stroke="#222" stroke-width="1.500"/>
<path d="M2837 852c16 14 21 34 17 68h-34c-4-34 1-54 17-68z" fill="#22b5d5"/>
<circle cx="2837.500" cy="871" r="10" fill="#bd2c8a"/><circle cx="2837.500" cy="871" r="5.500" fill="#f7d21c"/>
<path d="M2829 893h5v24h-5zM2836 889h5v28h-5zM2843 893h5v24h-5z" fill="#f7d21c"/>
<polygon points="2824,917 2852,917 2838,939" fill="#f59a1a"/>
<polygon points="2830,917 2846,917 2838,930" fill="#6c2bb0"/>
<!-- dragon -->
<path d="M2946 880c4 12 10 16 22 20l6 12-10 16-8-6-2-16-8-12zM3031 880c-4 12-10 16-22 20l-6 12 10 16 8-6 2-16 8-12z" fill="#f1905f" stroke="#f5c71c" stroke-width="2.500"/>
<ellipse cx="2988" cy="918" rx="20" ry="25" fill="#a7c98c"/>
<ellipse cx="2988" cy="921" rx="11" ry="22" fill="#f5d5a5"/>
<path d="M2972 940l-4 6h10zM2996 940l10 6h-10z" fill="#a7c98c"/>
<ellipse cx="2986.500" cy="873" rx="26" ry="22" fill="#a7c98c"/>
<path d="M2966 858l-3-18 8 12zM3008 858l4-18-10 12zM2957 870l-7-6 9 0zM3015 870l7-6-9 0z" fill="#e8c9c7"/>
<path d="M2988 832c6 6 6 12 2 14 4-1 5 2 4 5l-8 10c0-6-6-12-2-18 2-3 3-6 4-11z" fill="#f3922a"/>
<circle cx="2975" cy="872" r="5" fill="#5a2a10"/><circle cx="3000" cy="872" r="5" fill="#5a2a10"/>
<path d="M2978 884q9 5 18 0" fill="none" stroke="#3d5a33" stroke-width="1.500"/>
<text x="2630" y="993" font-size="16.500" fill="#b4b4b4" textLength="125.500" lengthAdjust="spacingAndGlyphs">Hamburguesa g...</text>
<text x="2778" y="993" font-size="16.500" fill="#b4b4b4" textLength="120.500" lengthAdjust="spacingAndGlyphs">nave espacial c...</text>
<text x="2922" y="993" font-size="16.500" fill="#b4b4b4" textLength="126" lengthAdjust="spacingAndGlyphs">Bebé de dragón...</text>
<circle cx="2652.700" cy="1137" r="13" fill="none" stroke="#bdbdbd" stroke-width="2.200"/><path d="M2652.700 1135v8" stroke="#bdbdbd" stroke-width="3"/><circle cx="2652.700" cy="1130.500" r="1.900" fill="#bdbdbd"/>
<g class="ic"><circle cx="3038.500" cy="1137" r="3.600"/><circle cx="3049" cy="1137" r="3.600"/><circle cx="3059.500" cy="1137" r="3.600"/></g>

<!-- appearance -->
<text class="l" x="2629" y="1213" textLength="90" lengthAdjust="spacingAndGlyphs">Apariencia</text>
<rect x="2630" y="1244" width="34" height="34" fill="#454545" stroke="#2e2e2e" stroke-width="2"/>
<text x="2640" y="1272" font-size="28" fill="#d0d0d0">?</text>
<text class="l" x="2689.500" y="1271.500" textLength="63.500" lengthAdjust="spacingAndGlyphs">Relleno</text>
<rect x="2630" y="1301.500" width="34" height="34" fill="#fff" stroke="#2e2e2e" stroke-width="2"/>
<rect x="2639" y="1310" width="16" height="17" fill="#5a5a5a" stroke="#2d2d2d" stroke-width="3"/>
<path d="M2631 1335l33-33" stroke="#e8101b" stroke-width="3.500"/>
<text x="2689.500" y="1329" font-size="21" fill="#e6e6e6" textLength="46.700" lengthAdjust="spacingAndGlyphs">Trazo</text>
<path d="M2689.500 1333.500h47" stroke="#d0d0d0" stroke-width="2" stroke-dasharray="2 1.500"/>
<rect x="2807" y="1299" width="138" height="40" rx="3" fill="#505050" stroke="#5e5e5e" stroke-width="2"/>
<rect x="2844" y="1300" width="64" height="38" fill="#454545"/>
<path class="ch" d="M2818 1312l6.500-6 6.500 6M2818 1326l6.500 6 6.500-6M2917 1316l7 6.500 7-6.500"/>
<rect x="2632" y="1362" width="30" height="30" fill="#646464" stroke="#b5b5b5" stroke-width="2"/>
<path d="M2640 1363h7v7h-7zM2654 1363h7v7h-7zM2633 1370h7v7h-7zM2647 1370h7v7h-7zM2640 1377h7v7h-7zM2654 1377h7v7h-7zM2633 1384h7v7h-7zM2647 1384h7v7h-7z" fill="#4f4f4f"/>
<text x="2689.500" y="1386" font-size="21" fill="#e6e6e6" textLength="81.500" lengthAdjust="spacingAndGlyphs">Opacidad</text>
<path d="M2689.500 1391.500h82" stroke="#d0d0d0" stroke-width="2" stroke-dasharray="2 1.500"/>
<rect x="2807" y="1357" width="138" height="40" rx="3" fill="#505050" stroke="#5e5e5e" stroke-width="2"/>
<rect x="2808" y="1358" width="100" height="38" fill="#454545"/>
<text class="v" x="2813" y="1382" textLength="51" lengthAdjust="spacingAndGlyphs">100%</text>
<path class="ch" d="M2921 1370l6.500 7-6.500 7"/>
<text x="2643" y="1454" font-style="italic" font-size="29" fill="#bdbdbd" style="font-family:'Liberation Serif',serif" textLength="22" lengthAdjust="spacingAndGlyphs">fx</text>
<path d="M2664 1454h7l-3.500 3.500z" fill="#bdbdbd"/>
<g class="ic"><circle cx="3046.500" cy="1492.600" r="3.600"/><circle cx="3057" cy="1492.600" r="3.600"/><circle cx="3067.500" cy="1492.600" r="3.600"/></g>

<!-- align -->
<text class="l" x="2629" y="1556.500" textLength="60.500" lengthAdjust="spacingAndGlyphs">Alinear</text>
<path d="M2642 1600h14l9 9v14.500h-23z" fill="#6b6b6b" stroke="#bdbdbd" stroke-width="2"/><path d="M2636 1595h6M2641 1594v-4" stroke="#bdbdbd" stroke-width="1.500"/>
<path d="M2669 1608l7 6 7-6" fill="none" stroke="#bdbdbd" stroke-width="1.800"/>
<g class="ic">
<rect x="2710.500" y="1592" width="2" height="36.500"/><rect x="2716" y="1596" width="15.500" height="11.500"/><rect x="2716" y="1612" width="25" height="10"/>
<rect x="2785" y="1592" width="2" height="36.500"/><rect x="2777" y="1596" width="18" height="11.500"/><rect x="2773" y="1612" width="26" height="10"/>
<rect x="2861" y="1592" width="2" height="36.500"/><rect x="2843" y="1596" width="16" height="11.500"/><rect x="2833" y="1612" width="26" height="10"/>
<rect x="2889" y="1594" width="36" height="2"/><rect x="2895" y="1598" width="10" height="25.500"/><rect x="2909.500" y="1598" width="11.500" height="16"/>
<rect x="2949" y="1608" width="36" height="2"/><rect x="2955.400" y="1596" width="9.600" height="26"/><rect x="2969" y="1600.500" width="11.700" height="17.500"/>
<rect x="3009" y="1625" width="35.600" height="2"/><rect x="3015.500" y="1596" width="9.500" height="25.600"/><rect x="3029.700" y="1606" width="11.300" height="15.600"/>
</g>
<g class="ic"><circle cx="3046.500" cy="1662" r="3.600"/><circle cx="3057" cy="1662" r="3.600"/><circle cx="3067.500" cy="1662" r="3.600"/></g>
<text class="l" x="2629" y="1726" textLength="104" lengthAdjust="spacingAndGlyphs">Buscatrazos</text>

<!-- bottom bar -->
<rect x="0" y="1759" width="3100" height="4" fill="#454545"/>
<rect x="0" y="1763" width="3100" height="12" fill="#1f2429"/>
<rect x="1872" y="1769" width="78" height="6" rx="2" fill="#b8505c"/>
</svg>
</body></html>
